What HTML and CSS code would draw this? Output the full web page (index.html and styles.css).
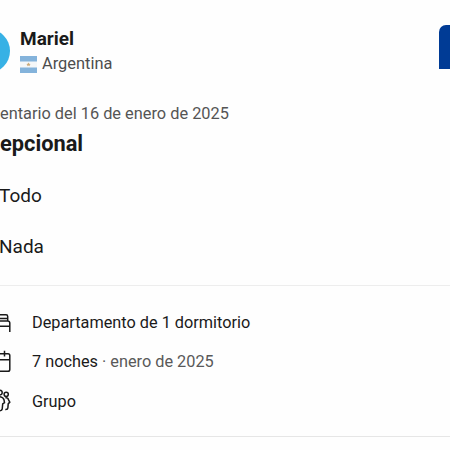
FILE: index.html
```html
<!DOCTYPE html>
<html lang="es">
<head>
	<meta charset="UTF-8">
	<title>Comentario</title>
	<link rel="stylesheet" href="styles.css">
</head>
<body>
	<div class="header">
		<div class="avatar"></div>
		<div class="user">
			<div class="name"><span>Mariel</span></div>
			<div class="country">
				<svg class="flag" width="17" height="17" viewBox="0 0 17 17">
					<rect width="17" height="17" fill="#f5f7f8"/>
					<rect width="17" height="5.5" fill="#84b3db"/>
					<rect y="11.5" width="17" height="5.5" fill="#84b3db"/>
					<path d="M8.5 6.4l.7 1.3 1.4.2-1 1 .2 1.4-1.3-.7-1.3.7.2-1.4-1-1 1.4-.2z" fill="#c9a978"/>
				</svg>
				<span>Argentina</span>
			</div>
		</div>
		<div class="score"></div>
	</div>
	<div class="date"><span>entario del 16 de enero de 2025</span></div>
	<div class="title"><span>epcional</span></div>
	<div class="text"><span>Todo</span></div>
	<div class="text"><span>Nada</span></div>
	<div class="details">
		<div class="row">
			<svg class="icon" width="12" height="26" viewBox="0 0 12 26">
				<path d="M0 4.8h6q1.7 0 1.7 1.7v4.2M0 8.4h7.6M0 10.9h7.6q2.2 0 2.2 2.2V22M0 16.2h9.8"/>
			</svg>
			<span>Departamento de 1 dormitorio</span>
		</div>
		<div class="row">
			<svg class="icon" width="12" height="26" viewBox="0 0 12 26">
				<path d="M0 4.7h8q1.8 0 1.8 1.8v14q0 1.8-1.8 1.8H0M0 10.7h9.8M4.5 1.7v5.8"/>
			</svg>
			<span>7 noches <i>· enero de 2025</i></span>
		</div>
		<div class="row">
			<svg class="icon" width="12" height="26" viewBox="0 0 12 26">
				<path d="M0 2.2q2.2.2 2.2 2.4T0 7M0 8.7q3.2.5 4 3.1l.5 2.8-1.8 1.4-.5 5.2q-.2 1.5-2.2 1.5"/>
				<circle cx="6.2" cy="6.3" r="2.1"/>
				<path d="M5.4 9.8q2.7-.3 3.1 2l1.3 2.3-1.6 1.8-.3 3.9q-.2 1.8-2.6 1.6"/>
			</svg>
			<span>Grupo</span>
		</div>
	</div>
</body>
</html>
```

FILE: styles.css
```css
body {
	margin: 0;
	height: 450px;
	overflow: hidden;
	background: #fefefe;
	color: #1a1a1a;
	font-family: Roboto, "Liberation Sans", sans-serif;
	font-size: 16.3px;
}
.header {
	display: flex;
	height: 76px;
}
.avatar {
	flex: none;
	width: 44px;
	height: 44px;
	margin: 29px 10px 0 -34px;
	border-radius: 50%;
	background: #37b1e5;
}
.user {
	flex: 1;
	padding-top: 27px;
}
.name {
	font-size: 19px;
	font-weight: 700;
	line-height: 24px;
}
.country {
	display: flex;
	align-items: center;
	gap: 5px;
	line-height: 26px;
	font-size: 16.4px;
	color: #4d4d4d;
}
.flag {
	margin-top: 1px;
}
.score {
	width: 11px;
	height: 44px;
	margin-top: 25px;
	border-radius: 7px 0 0 0;
	background: #003b95;
}
.date {
	margin-top: 26px;
	line-height: 24px;
	font-size: 16.35px;
	color: #555;
}
.title {
	margin-top: 4px;
	line-height: 28px;
	font-size: 21.8px;
	font-weight: 700;
}
.text {
	height: 51px;
	margin-left: -1px;
	line-height: 24px;
	font-size: 19px;
}
.title + .text {
	margin-top: 26px;
}
.details {
	height: 152px;
	box-sizing: border-box;
	margin-top: -1px;
	padding-top: 17px;
	border-top: 1px solid #ededed;
	border-bottom: 1px solid #e6e6e6;
}
.row {
	display: flex;
	align-items: center;
	gap: 20px;
	height: 39px;
}
.row:last-child {
	height: 40px;
}
.row i {
	font-style: normal;
	color: #595959;
}
.icon {
	fill: none;
	stroke: #1a1a1a;
	stroke-width: 1.5;
}
```
